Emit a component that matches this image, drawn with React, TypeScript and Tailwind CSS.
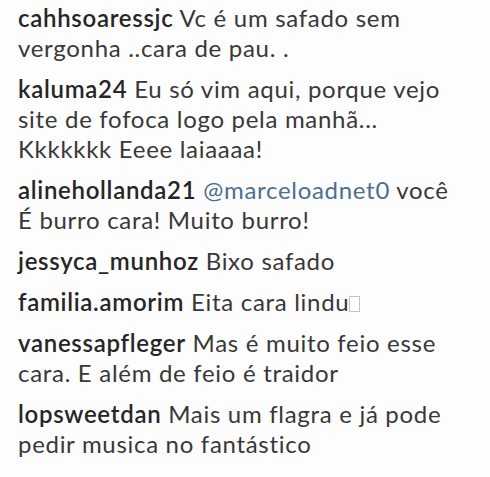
import React from 'react';

type Comment = {
  user: string;
  mention?: string;
  lines: string[];
  box?: boolean;
};

// line breaks follow the screenshot
const comments: Comment[] = [
  { user: 'cahhsoaressjc', lines: ['Vc é um safado sem', 'vergonha ..cara de pau. .'] },
  { user: 'kaluma24', lines: ['Eu só vim aqui, porque vejo', 'site de fofoca logo pela manhã...', 'Kkkkkkk Eeee laiaaaa!'] },
  { user: 'alinehollanda21', mention: '@marceloadnet0', lines: ['você', 'É burro cara! Muito burro!'] },
  { user: 'jessyca_munhoz', lines: ['Bixo safado'] },
  { user: 'familia.amorim', lines: ['Eita cara lindu'], box: true },
  { user: 'vanessapfleger', lines: ['Mas é muito feio esse', 'cara. E além de feio é traidor'] },
  { user: 'lopsweetdan', lines: ['Mais um flagra e já pode', 'pedir musica no fantástico'] },
];

const App = () => {
  return (
    <div
      className="w-[490px] h-[477px] overflow-hidden bg-[#fdfdfd] pl-[18px] pt-[3px]"
      style={{ fontFamily: 'Lato, "Open Sans", sans-serif' }}
    >
      <div className="flex flex-col gap-[11px]">
        {comments.map((c, i) => (
          <p key={i} className="whitespace-nowrap text-[24px] leading-[30px] text-[#383838] tracking-[0.7px]">
            <span className="font-semibold text-[#262626]">{c.user}</span>{' '}
            {c.mention && <span className="text-[#4a6f93]">{c.mention} </span>}
            {c.lines.map((l, j) => (
              <React.Fragment key={j}>
                {j > 0 && <br />}
                {l}
              </React.Fragment>
            ))}
            {c.box && (
              <span className="inline-block w-[11px] h-[16px] border border-[#c4c4c4] align-[-1px]" />
            )}
          </p>
        ))}
      </div>
    </div>
  );
};

export default App;
